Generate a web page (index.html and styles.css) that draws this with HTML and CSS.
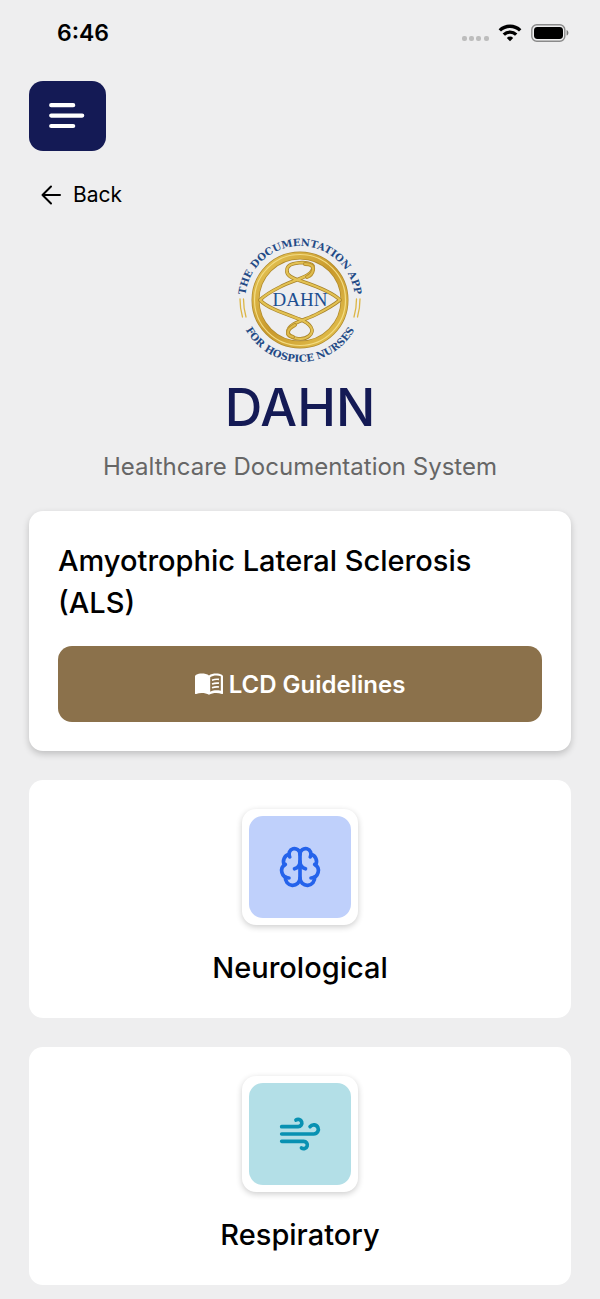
FILE: index.html
```html
<!DOCTYPE html>
<html lang="en">
<head>
  <meta charset="UTF-8" />
  <meta name="viewport" content="width=device-width, initial-scale=1.0"/>
  <title>DAHN - Healthcare Documentation System</title>
  <link rel="stylesheet" href="styles.css">
</head>
<body>
  <div class="status-bar">
    <span class="time">6:46</span>
    <div class="status-icons">
      <svg class="signal" width="28" height="6" viewBox="0 0 28 6" fill="#bdbdbd"><rect x="1" y="0" width="5" height="5" rx="2"/><rect x="8" y="0" width="5" height="5" rx="2"/><rect x="15" y="0" width="5" height="5" rx="2"/><rect x="23" y="0" width="5" height="5" rx="2"/></svg>
      <svg width="24" height="18" viewBox="0 0 24 18" fill="none" stroke="#000" stroke-width="3.4"><path d="M1.8 6.4a14.6 14.6 0 0 1 20.4 0"/><path d="M5.8 10.6a8.9 8.9 0 0 1 12.4 0"/><path d="M8.8 13.9a4.6 4.6 0 0 1 6.4 0L12 17.2z" fill="#000" stroke="none"/></svg>
      <svg width="38" height="18" viewBox="0 0 38 18"><rect x="0.8" y="0.8" width="33" height="16.4" rx="5" fill="none" stroke="#8a8a8a" stroke-width="1.4"/><rect x="3" y="3" width="29" height="12" rx="3.4"/><path d="M35.6 6v5.6c2.4-.9 2.4-4.7 0-5.6z" fill="#777"/></svg>
    </div>
  </div>

  <header class="top">
    <button class="menu-btn" aria-label="Menu">
      <svg width="36" height="26" viewBox="0 0 36 26" stroke="#fff" stroke-width="4.2" stroke-linecap="round"><path d="M2.2 2.2h22M2.2 12.6h31M2.2 23h22"/></svg>
    </button>
    <a class="back" href="#">
      <svg width="20" height="20" viewBox="0 0 20 20" fill="none" stroke="#000" stroke-width="2" stroke-linecap="round" stroke-linejoin="round"><path d="M19 10H1.5M10 1.5L1.5 10l8.5 8.5"/></svg>
      Back
    </a>
  </header>

  <main>
    <div class="brand">
      <svg class="logo" width="130" height="130" viewBox="0 0 130 130" role="img" aria-label="DAHN logo">
        <defs>
          <linearGradient id="gold" x1="0" y1="0" x2="1" y2="1">
            <stop offset="0" stop-color="#e8c95a"/>
            <stop offset="0.5" stop-color="#c9992b"/>
            <stop offset="1" stop-color="#e6c552"/>
          </linearGradient>
          <path id="arcTop" d="M10 66A55 55 0 0 1 120 66"/>
          <path id="arcBottom" d="M3 65A62 62 0 0 0 127 65"/>
        </defs>
        <circle cx="65" cy="65" r="44.5" fill="none" stroke="#b08a2c" stroke-width="8"/>
        <circle cx="65" cy="65" r="44.5" fill="none" stroke="url(#gold)" stroke-width="6.5"/>
        <circle cx="65" cy="65" r="45.5" fill="none" stroke="#f2dc84" stroke-width="1.2"/>
        <g fill="none" stroke-linecap="round" stroke-linejoin="round">
          <path stroke="#a8832a" stroke-width="3.6" d="M52 35C52 26 76 26 78 31C79 42 60 44 45 52C37 56 29 61 25 65C31 72 45 77 64 84C77 89 80 96 74 101C68 106 54 104 53 97C52 88 71 85 82 79C92 74 100 69 105 65C98 58 84 52 66 46C56 43 51 40 52 35Z"/>
          <path stroke="#e3c253" stroke-width="2.2" d="M52 35C52 26 76 26 78 31C79 42 60 44 45 52C37 56 29 61 25 65C31 72 45 77 64 84C77 89 80 96 74 101C68 106 54 104 53 97C52 88 71 85 82 79C92 74 100 69 105 65C98 58 84 52 66 46C56 43 51 40 52 35Z"/>
          <path stroke="#b8902e" stroke-width="4" d="M70 29Q79 29 78 35Q77 40 72 42M60 90Q52 94 53 99Q54 101 58 102"/>
          <path stroke="#dfbc4c" stroke-width="2" d="M70 29Q79 29 78 35Q77 40 72 42M60 90Q52 94 53 99Q54 101 58 102"/>
          <path stroke="#dcb646" stroke-width="1.3" d="M5 64c0 7 .8 12 2.5 18M8.5 64c0 7 .8 12 2.5 18M125 64c0 7-.8 12-2.5 18M121.5 64c0 7-.8 12-2.5 18"/>
        </g>
        <text class="logo-name" x="65" y="71" text-anchor="middle">DAHN</text>
        <text class="logo-ring"><textPath href="#arcTop" startOffset="50%" text-anchor="middle">THE DOCUMENTATION APP</textPath></text>
        <text class="logo-ring"><textPath href="#arcBottom" startOffset="50%" text-anchor="middle">FOR HOSPICE NURSES</textPath></text>
      </svg>
      <h1>DAHN</h1>
      <p class="tagline">Healthcare Documentation System</p>
    </div>

    <section class="card condition">
      <h2>Amyotrophic Lateral Sclerosis (ALS)</h2>
      <button class="lcd-btn">
        <svg width="28" height="22" viewBox="0 0 28 22"><path fill="#fff" d="M14 2.5C11 .2 4.5 0 1.2 1.7Q0 2.2 0 3.3V20.2Q0 21.4 1.2 20.9C5 19.5 10.5 19.6 14 21.8C17.5 19.6 23 19.5 26.8 20.9Q28 21.4 28 20.2V3.3Q28 2.2 26.8 1.7C23.5 0 17 .2 14 2.5z"/><path fill="#8b714b" d="M15.2 4.2C18 2.3 22.5 2.2 25.8 3.2V17.8C22 17 18.3 17.2 15.2 18.8z"/><path d="M17 7.2q3.5-1.3 7-.8M17 11q3.5-1.3 7-.8M17 14.8q3.5-1.3 7-.8" fill="none" stroke="#fff" stroke-width="1.7"/></svg>
        LCD Guidelines
      </button>
    </section>

    <a class="card category" href="#">
      <span class="tile">
        <span class="tile-icon neuro">
          <svg width="44" height="44" viewBox="0 0 24 24"><path d="M12 18V5"/><path d="M15 13a4.17 4.17 0 0 1-3-4 4.17 4.17 0 0 1-3 4"/><path d="M17.598 6.5A3 3 0 1 0 12 5a3 3 0 1 0-5.598 1.5"/><path d="M17.997 5.125a4 4 0 0 1 2.526 5.77"/><path d="M18 18a4 4 0 0 0 2-7.464"/><path d="M19.967 17.483A4 4 0 1 1 12 18a4 4 0 1 1-7.967-.517"/><path d="M6 18a4 4 0 0 1-2-7.464"/><path d="M6.003 5.125a4 4 0 0 0-2.526 5.77"/></svg>
        </span>
      </span>
      <span class="label">Neurological</span>
    </a>

    <a class="card category" href="#">
      <span class="tile">
        <span class="tile-icon resp">
          <svg width="44" height="44" viewBox="0 0 24 24"><path d="M12.8 19.6A2 2 0 1 0 14 16H2"/><path d="M17.5 8a2.5 2.5 0 1 1 2 4H2"/><path d="M9.8 4.4A2 2 0 1 1 11 8H2"/></svg>
        </span>
      </span>
      <span class="label">Respiratory</span>
    </a>
  </main>
</body>
</html>
```
FILE: styles.css
```css
* { box-sizing: border-box; }
body { font-family: Inter, "Liberation Sans", sans-serif; background: #eeeeef; margin: 0; color: #000; }
svg { display: block; flex: none; }
button { font-family: inherit; border: none; cursor: pointer; }
a { color: inherit; text-decoration: none; }

.status-bar { display: flex; justify-content: space-between; align-items: center; height: 66px; padding: 0 31px 0 57px; }
.time { font-size: 23px; font-weight: 600; }
.status-icons { display: flex; align-items: center; gap: 9px; }
.signal { margin-top: 12px; }

.top { padding: 15px 29px 0; }
.menu-btn { display: flex; justify-content: center; align-items: center; width: 77px; height: 70px; padding: 0 2px 0 0; background: #141a55; border-radius: 14px; }
.back { display: inline-flex; align-items: center; gap: 12px; margin-top: 29px; padding-left: 12px; font-size: 21px; line-height: 30px; }

main { display: flex; flex-direction: column; gap: 29px; padding: 0 29px 14px; }
.brand { display: flex; flex-direction: column; align-items: center; margin-top: 25px; }
h1 { margin: 6px 0 0; font-size: 52px; line-height: 74px; font-weight: 500; color: #141a55; }
.tagline { margin: 7px 0 0; font-size: 24px; line-height: 30px; color: #666; }
.logo-name { font-family: "Liberation Serif", serif; font-size: 19px; fill: #1d4f91; }
.logo-ring { font-family: "DejaVu Serif", serif; font-size: 10px; font-weight: bold; fill: #234a86; }

.card { display: block; background: #fff; border-radius: 14px; padding: 29px; }
.condition { box-shadow: 0 3px 7px rgba(0,0,0,0.2); }
h2 { margin: 0 0 22px; font-size: 29px; line-height: 42px; font-weight: 500; }
.lcd-btn { display: flex; justify-content: center; align-items: center; gap: 6px; width: 100%; height: 76px; background: #8b714b; color: #fff; border-radius: 14px; font-size: 24px; font-weight: 600; }

.category { display: flex; flex-direction: column; align-items: center; gap: 22px; }
.tile { padding: 7px; background: #fff; border-radius: 14px; box-shadow: 0 2px 6px rgba(0,0,0,0.2); }
.tile-icon { display: flex; justify-content: center; align-items: center; width: 102px; height: 102px; border-radius: 14px; }
.tile-icon svg { fill: none; stroke-width: 2; stroke-linecap: round; stroke-linejoin: round; }
.neuro { background: #bfd0fb; }
.neuro svg { stroke: #2563eb; }
.resp { background: #b3dfe7; }
.resp svg { stroke: #0891b2; }
.label { font-size: 29px; line-height: 42px; font-weight: 500; }
```
